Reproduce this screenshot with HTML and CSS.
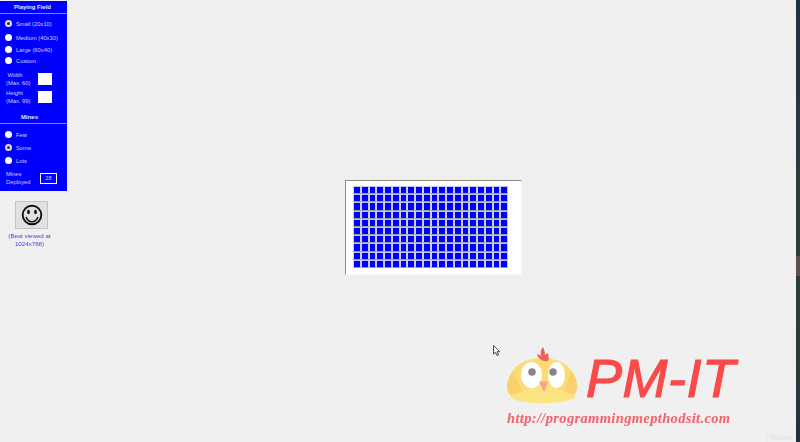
FILE: index.html
```html
<!DOCTYPE html>
<html lang="en">
<head>
    <meta charset="UTF-8">
    <title>Minesweeper</title>
    <link rel="stylesheet" href="styles.css">
</head>
<body>
    <div class="page">
        <div class="side">
            <div class="panel">
                <div class="panel-title">Playing Field</div>
                <div class="options options-field">
                    <label class="option"><span class="radio radio-on"></span>Small (20x10)</label>
                    <label class="option"><span class="radio"></span>Medium (40x30)</label>
                    <label class="option"><span class="radio"></span>Large (60x40)</label>
                    <label class="option"><span class="radio"></span>Custom</label>
                </div>
                <div class="size-row">
                    <span class="size-label">&nbsp;Width<br>(Max. 60)</span>
                    <span class="size-box"></span>
                </div>
                <div class="size-row">
                    <span class="size-label">Height<br>(Max. 99)</span>
                    <span class="size-box"></span>
                </div>
                <div class="panel-title panel-title-mines">Mines</div>
                <div class="options options-mines">
                    <label class="option"><span class="radio"></span>Few</label>
                    <label class="option"><span class="radio radio-on"></span>Some</label>
                    <label class="option"><span class="radio"></span>Lots</label>
                </div>
                <div class="deployed">
                    <span class="deployed-label">Mines<br>Deployed</span>
                    <span class="deployed-count">28</span>
                </div>
            </div>
            <button class="smiley" type="button">
                <svg width="24" height="24" viewBox="0 0 24 24">
                    <circle cx="12" cy="12" r="9.3" fill="none" stroke="#111" stroke-width="1.900"/>
                    <ellipse cx="8.500" cy="9" rx="1.400" ry="2.200" fill="#111"/>
                    <ellipse cx="15.500" cy="9" rx="1.400" ry="2.200" fill="#111"/>
                    <path d="M6 14c1.500 3.400 3.600 4.800 6 4.800s4.500-1.400 6-4.800" fill="none" stroke="#111" stroke-width="1.600"/>
                </svg>
            </button>
            <div class="best">(Best viewed at<br>1024x768)</div>
        </div>
        <div class="board"><div class="grid" id="grid"></div></div>
    </div>

    <div class="logo">
        <svg class="chick" width="72" height="60" viewBox="0 0 72 60">
            <path d="M0 41C1 23 15 12 35 12s35 11 35 29c0 12-15 16-35 16S0 53 0 41z" fill="#fcdc72"/>
            <path d="M2 48c-1-3-2-5-2-7 0-6 3-11 6-15l10 20z" fill="#f9cf6f"/>
            <path d="M68 48c1-3 2-5 2-7 0-6-3-11-6-15l-7 20z" fill="#f9cf6f"/>
            <path d="M3 50c11-2 23-12 33-12s22 10 33 12c-4 5-16 7-34 7S7 55 3 50z" fill="#fbe583"/>
            <path d="M37 15c-3-1-6-3-7-6 1-1 3 0 4 1-1-3 0-7 2-9 1 2 2 5 2 8 1-1 2-2 3-1 1 1 1 2 0 2 1 1 1 3 0 5z" fill="#f0605a"/>
            <ellipse cx="24.500" cy="29" rx="10.500" ry="13" fill="#fff"/>
            <ellipse cx="49.500" cy="29" rx="8.500" ry="13" fill="#fff"/>
            <circle cx="25" cy="26" r="3.800" fill="#8b8388"/>
            <circle cx="46" cy="26" r="3.800" fill="#8b8388"/>
            <path d="M32 35.500h9l-4 11z" fill="#f4a58c"/>
        </svg>
        <div class="logo-name">PM-IT</div>
        <div class="logo-url">http://programmingmepthodsit.com</div>
    </div>

    <svg class="cursor" width="8" height="11" viewBox="0 0 8 11">
        <path d="M.5.5v8.500l2-1.800 1.500 3.300 1.500-.7-1.500-3.100h2.800z" fill="#fff" stroke="#222" stroke-width=".8"/>
    </svg>
    <div class="record">Record</div>
    <div class="edge"></div>

    <script>
        const grid = document.getElementById('grid');
        for (let i = 0; i < 200; i++) {
            const cell = document.createElement('div');
            cell.className = 'cell';
            grid.appendChild(cell);
        }
    </script>
</body>
</html>
```

FILE: styles.css
```css
html, body {
    margin: 0;
    height: 100%;
    overflow: hidden;
}
body {
    font-family: "Liberation Sans", Arial, sans-serif;
    background-color: #f0f0f0;
    color: white;
}
.page {
    display: flex;
    align-items: flex-start;
    height: 100%;
}
.side {
    width: 67px;
    flex: none;
    padding-top: 1px;
    display: flex;
    flex-direction: column;
    align-items: flex-start;
    filter: blur(.3px); /* the reference is a soft video frame */
}
.panel {
    width: 67px;
    height: 190px;
    background-color: #0000ff;
    font-size: 5.800px;
    color: #d0d0ff;
}
.panel-title {
    height: 12px;
    line-height: 12px;
    padding-right: 2px;
    font-size: 6px;
    text-align: center;
    font-weight: bold;
    color: #e8e8ff;
    border-bottom: 1px solid #7f7fff;
}
.panel-title-mines {
    margin-top: 8px;
    padding-right: 8px;
}
.options {
    display: flex;
    flex-direction: column;
    padding-left: 5px;
}
.options-field {
    padding-top: 4px;
    margin-bottom: 7px;
}
.options-field .option:nth-child(2) {
    margin-top: 3px;
}
.options-field .option:nth-child(3) {
    margin-top: 1px;
}
.options-mines {
    padding-top: 5px;
    gap: 2px;
}
.option {
    display: flex;
    align-items: center;
    gap: 4px;
    height: 11px;
}
.radio {
    width: 7px;
    height: 7px;
    background-color: white;
    border-radius: 50%;
    flex: none;
}
.radio-on {
    width: 3px;
    height: 3px;
    border: 2px solid #dddddd;
    background-color: #333333;
}
.size-row {
    display: flex;
    align-items: center;
    justify-content: space-between;
    height: 12px;
    margin-bottom: 6px;
    padding: 0 15px 0 6px;
    line-height: 8px;
}
.size-box {
    width: 14px;
    height: 12px;
    background-color: white;
}
.deployed {
    display: flex;
    align-items: center;
    justify-content: space-between;
    margin-top: 4px;
    padding: 0 10px 0 6px;
    line-height: 8px;
}
.deployed-count {
    width: 15px;
    height: 9px;
    line-height: 9px;
    border: 1px solid white;
    text-align: center;
}
.smiley {
    width: 33px;
    height: 28px;
    margin: 10px 0 0 15px;
    padding: 0;
    display: flex;
    align-items: center;
    justify-content: center;
    background-color: #e1e1e1;
    border: 1px solid #c4c4c4;
}
.best {
    margin-top: 3px;
    width: 59px;
    text-align: center;
    font-size: 6.200px;
    line-height: 8px;
    color: #4040e0;
}
.board {
    margin: 180px 0 0 278px;
    width: 168px;
    height: 88px;
    padding: 5px 0 0 7px;
    background-color: white;
    border-top: 1px solid #8a8a8a;
    border-left: 1px solid #8a8a8a;
    border-right: 1px solid #f6f6f6;
    border-bottom: 1px solid #f6f6f6;
}
.grid {
    width: 155px;
    height: 82px;
    display: grid;
    grid-template-columns: repeat(20, 1fr);
    grid-template-rows: repeat(10, 1fr);
    filter: blur(.4px);
}
.cell {
    background-color: #0000ff;
    border: 1px solid;
    border-color: #c0c0ec #c8c8d0 #9c9c9c #d0d0f4;
}
.logo {
    position: absolute;
    left: 507px;
    top: 345px;
    width: 232px;
    height: 82px;
    filter: blur(.5px);
}
.chick {
    position: absolute;
    left: 0;
    top: 1px;
}
.logo-name {
    position: absolute;
    left: 79px;
    top: 10px;
    font-size: 54px;
    line-height: 46px;
    letter-spacing: .5px;
    font-style: italic;
    color: #fb4a4a;
    -webkit-text-stroke: 1.200px #fb4a4a;
    white-space: nowrap;
}
.logo-url {
    position: absolute;
    left: 0;
    top: 64.500px;
    font-family: "Liberation Serif", serif;
    font-size: 14.500px;
    line-height: 16px;
    letter-spacing: .35px;
    font-style: italic;
    font-weight: bold;
    color: #f5606a;
    white-space: nowrap;
}
.cursor {
    position: absolute;
    left: 493px;
    top: 345px;
}
.record {
    position: absolute;
    left: 767px;
    top: 430px;
    width: 27px;
    height: 12px;
    line-height: 14px;
    text-align: center;
    font-size: 7px;
    color: #e2e2e2;
    border: 1px solid #ececec;
    border-bottom: 0;
    box-sizing: border-box;
}
.edge {
    position: absolute;
    top: 0;
    right: 0;
    width: 4px;
    height: 100%;
    background: linear-gradient(#1e3044 0, #2e3c3c 45%, #2e3c3c 58%, #5c504c 58%, #5c504c 62.500%, #2c3a3a 62.500%, #2a3a3a 85%, #1e2e3c 100%);
}
```
